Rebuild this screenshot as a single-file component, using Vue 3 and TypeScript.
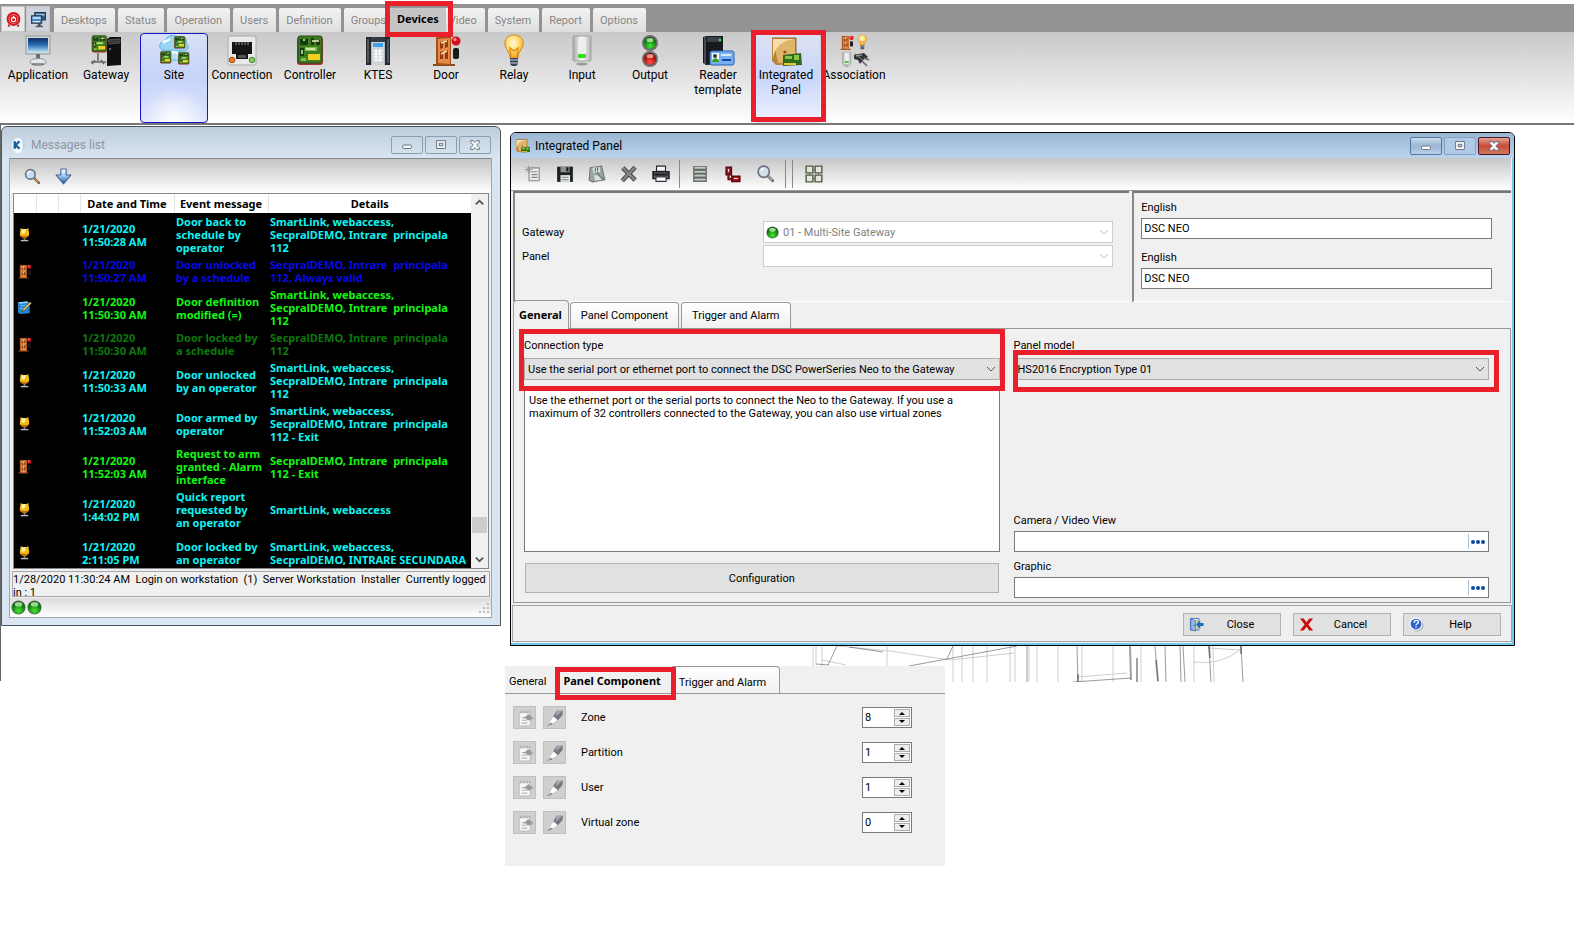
<script setup lang="ts">
import { ref } from 'vue'

interface RibbonItem { label: string; icon: string; state?: 'selected' | 'marked' }
interface EventRow { icon: string; date: string; text: string; details: string; color: string; tall?: boolean }
interface ComponentRow { label: string; value: number }

const board = '<rect x="3" y="2" width="26" height="28" rx="3" fill="#a33"/><rect x="4" y="1" width="24" height="27" rx="2" fill="#3d7a22" stroke="#234d14"/><path d="M6 4h8v6H6zM17 3h3v7h-3zM22 5h4v5h-4zM6 13h4v8H6z" fill="#163d10"/><path d="M11 12h12v4H11zM7 23h5v3H7z" fill="#7fc04a"/><rect x="14" y="19" width="12" height="6" fill="#f0d020"/><path d="M9 5h2M18 6h7M12 14h9M8 15v4" stroke="#e8f0c0" stroke-width="1.4"/>'
const door = '<path d="M3 30h22" stroke="#8a4a22" stroke-width="2"/><path d="M6 2h15v28H6z" fill="#a4501c"/><path d="M8 4l12-1v26L8 28z" fill="#e58a45"/><path d="M10 7l3-1v7l-3 1zM15 6l3-1v7l-3 1zM10 17l3-1v8h-3zM15 16l3-1v9h-3z" fill="#8c3c10"/><path d="M11 8l6-2M11 19l6-3" stroke="#ffd9a8" stroke-width="1.5"/><circle cx="26" cy="6" r="4.5" fill="#d41020"/><circle cx="25" cy="4.500" r="1.600" fill="#ff9a9a"/><rect x="23" y="13" width="6" height="11" rx="2" fill="#191919"/>'
const bulb = '<path d="M16 0c-7 0-10 5-9 10 1 5 5 7 5 13h8c0-6 4-8 5-13 1-5-2-10-9-10z" fill="url(#g-bulb)" stroke="#d18a1c"/><path d="M13 22l-1-9 4 3 4-3-1 9" fill="none" stroke="#e09010" stroke-width="1.4"/><path d="M12 23h8v6l-2 2h-4l-2-2z" fill="#38405c"/><path d="M12 25h8M12 28h8" stroke="#cdd4e4"/>'
const inputUnit = '<rect x="7" y="1" width="18" height="25" rx="1" fill="url(#g-silver)" stroke="#a0a0a0"/><rect x="12" y="3" width="8" height="15" fill="#ededed"/><rect x="12" y="19" width="8" height="4" rx="1" fill="#35dc20"/><ellipse cx="16" cy="29" rx="6" ry="1.500" fill="#999"/>'
const magnifier = '<path d="M19 19l9 9" stroke="#7a6140" stroke-width="5" stroke-linecap="round"/><path d="M20 20l7 7" stroke="#d9a45c" stroke-width="2"/><circle cx="12" cy="12" r="9" fill="#c7dcf4" stroke="#67717f" stroke-width="3"/><path d="M7 11a6 6 0 0 1 6-5" fill="none" stroke="#fff" stroke-width="2.500"/>'
const led = '<circle cx="16" cy="16" r="15" fill="#5d6b5d"/><circle cx="16" cy="16" r="13.500" fill="url(#g-green)"/><ellipse cx="16" cy="9" rx="8" ry="5" fill="#c4f7b8" opacity=".75"/>'
const integrated = '<path d="M2 3h24v27H6l-4-4z" fill="#b8863a"/><path d="M3 4h22v24H8z" fill="#e0b56a"/><path d="M3 23C5 12 11 6 24 4H3z" fill="#f5dcaa"/><path d="M26 3v26M2 3h24" stroke="#95652a"/><circle cx="15" cy="17" r="1.600" fill="#8a5c20"/><path d="M13 20l18-2 1 12-19 1z" fill="#2f6a1c"/><path d="M15 21h7v3h-7zM24 20h5v5h-5z" fill="#86c644"/><path d="M14 29h12" stroke="#e6c93a" stroke-width="2"/>'

const icons: Record<string, string> = {
  application: '<rect x="4" y="1" width="24" height="18" fill="#d6dade" stroke="#8d959c"/><rect x="6" y="3" width="20" height="14" fill="url(#g-screen)"/><path d="M14 19h4v5h-4z" fill="#65707c"/><ellipse cx="16" cy="27" rx="8" ry="3.500" fill="#e5e8ea" stroke="#8d959c"/><path d="M10 29h12" stroke="#444"/>',
  gateway: `<g transform="translate(0 0) scale(.58)">${board}</g><path d="M8 18v8M1 27h15M5 25l-3 4M11 25l3 4" stroke="#666" stroke-width="1.5"/><path d="M17 4l3-2h11v28l-14 1z" fill="#101010"/><path d="M18 5l12-1v3H18zM18 9l12-1" fill="#333" stroke="#555"/><circle cx="20" cy="14" r="1" fill="#888"/>`,
  site: `<path d="M4 15c-5-4-1-9 3-8 1-7 9-8 12-5 5-2 11 1 9 6 4 3 2 8-2 8z" fill="#9ad4f0" stroke="#5fb0dc"/><path d="M6 24c-4-3 1-8 5-7 4-4 11-2 12 2 4 0 6 5 2 7z" fill="#b2e0f5" stroke="#6ab8de"/><path d="M5 8c3-3 5-2 7-4M14 18c3-2 5 0 7 2" stroke="#fff" stroke-width="2" fill="none"/><g transform="translate(15 1) scale(.42)">${board}</g><g transform="translate(1 16) scale(.42)">${board}</g><g transform="translate(19 17) scale(.42)">${board}</g>`,
  connection: '<rect x="2" y="1" width="28" height="29" rx="2" fill="#e9e9e9" stroke="#aaa"/><path d="M6 7h20v12h-4v5H10v-5H6z" fill="#161616"/><path d="M10 7v3M13 7v3M16 7v3M19 7v3M22 7v3" stroke="#889"/><path d="M12 20h8v3h-8z" fill="#555"/><circle cx="6" cy="25" r="2.800" fill="#ef7b31" stroke="#a44a14"/><circle cx="26" cy="25" r="2.800" fill="#84c765" stroke="#4b8435"/>',
  controller: board,
  ktes: '<path d="M4 2h24v27l-5 1H9l-5-1z" fill="#b4bac0"/><path d="M4 2h5v28H4zM28 2h-5v28h5z" fill="#25292d"/><path d="M6 4v24M26 4v24" stroke="#7a848c"/><rect x="10" y="2" width="12" height="28" fill="#cfd4da"/><path d="M9 2h14v5H9z" fill="#32383e"/><rect x="11" y="8" width="10" height="4" fill="#3c9ff0"/><path d="M11 16h10M11 19h10M11 22h10M11 25h10M14 14v13M18 14v13" stroke="#fff" stroke-width="1.200"/>',
  door,
  relay: bulb,
  input: inputUnit,
  output: '<circle cx="16" cy="8" r="8" fill="#6d6d6d"/><circle cx="16" cy="8" r="6" fill="url(#g-green)"/><ellipse cx="16" cy="5" rx="3.500" ry="2" fill="#b4f5a4" opacity=".8"/><circle cx="16" cy="24" r="8" fill="#6d6d6d"/><circle cx="16" cy="24" r="6" fill="url(#g-red)"/><ellipse cx="16" cy="21" rx="3.500" ry="2" fill="#ffb0a8" opacity=".8"/>',
  reader: '<path d="M1 2l4-1h16v28l-17 1-3-2z" fill="#17191d"/><path d="M5 2h14v5H5z" fill="#3c424a"/><path d="M3 2v27" stroke="#72808c"/><circle cx="18" cy="5" r="1.300" fill="#3fe03b"/><rect x="8" y="16" width="24" height="14" rx="2" fill="#76aef0" stroke="#2360b8"/><rect x="10" y="18" width="7" height="9" fill="#f3f6fb"/><circle cx="13" cy="21" r="2" fill="#2f3b3d"/><path d="M10 27c0-5 7-5 7 0z" fill="#35a028"/><path d="M19 20h10" stroke="#fff" stroke-width="1.500"/><path d="M20 25h9" stroke="#1748a0" stroke-width="2"/>',
  integrated,
  association: `<g transform="translate(1 0) scale(.48)">${door}</g><g transform="translate(17 0) scale(.46)">${bulb}</g><g transform="translate(1 17) scale(.48)">${inputUnit}</g><path d="M16 20l10-2 4 4-5 3-3 4-2-4-4-1z" fill="#333"/><path d="M17 19l8 6M24 26l5 5M26 23l5 2" stroke="#666" stroke-width="1.500"/><path d="M18 21l6-1" stroke="#aaa"/>`,
  alarm: '<circle cx="16" cy="15" r="13" fill="#d0161e"/><path d="M7 24l-2 5h5M25 24l2 5h-5" fill="#a01010"/><circle cx="16" cy="15" r="8.500" fill="none" stroke="#f0706a" stroke-width="2"/><circle cx="16" cy="16" r="4" fill="none" stroke="#fff" stroke-width="2"/><path d="M16 9v5" stroke="#fff" stroke-width="2.500"/>',
  screens: '<path d="M9 3h20v14H9z" fill="#2f5e8e" stroke="#243442" stroke-width="2"/><path d="M11 5h16v4H11z" fill="#8fc0e8"/><path d="M3 9h19v14H3z" fill="#4f88bc" stroke="#243442" stroke-width="2"/><path d="M5 11h15v4H5z" fill="#b8dcf5"/><path d="M5 20h14" stroke="#e6f3fb" stroke-width="2"/><path d="M15 23h5v5h-5z" fill="#444"/><path d="M11 29h13" stroke="#555" stroke-width="3"/>',
  kantech: '<ellipse cx="15" cy="16" rx="13" ry="16" fill="#f5fbff"/><path d="M23 3c8 7 8 19 0 26 3-9 3-17 0-26z" fill="#a7d6ee"/><path d="M8 7v16M18 7l-8 8 8 8" fill="none" stroke="#145f98" stroke-width="5"/>',
  magnifier,
  arrowDown: '<path d="M11 2h10v11h9L16 30 2 13h9z" fill="url(#g-arrow)" stroke="#42618f" stroke-width="2" stroke-linejoin="round"/>',
  user: '<path d="M8 2l4 2h8l4-2 2 12c0 7-5 9-10 9S5 21 6 14z" fill="#f4b916"/><path d="M10 5h9l-2 8-7 2z" fill="#fff2a0"/><path d="M7 17c4 3 14 3 18 0-1 4-4 7-9 7s-8-3-9-7z" fill="#c06c08"/><path d="M14 24h4v3h-4z" fill="#aaa"/><path d="M8 29h16" stroke="#bbb" stroke-width="3"/>',
  doorSmall: door,
  edit: '<path d="M2 5l20-2 5 3v22l-20 2-5-3z" fill="#2783d0"/><path d="M2 5l20-2 3 3-19 2z" fill="#9bd5ff"/><path d="M7 12h14M7 18h14" stroke="#72c4ff" stroke-width="2"/><path d="M11 25l2-6L28 4l3 3-15 15z" fill="#e9cd72" stroke="#4a4020" stroke-width="1.500"/>',
  led,
  newDoc: '<path d="M9 5h18v23H9z" fill="#ededed" stroke="#888" stroke-width="2"/><path d="M13 12h11M13 17h11M13 22h11" stroke="#888" stroke-width="2"/><path d="M8 1v14M1 8h14M3 3l10 10M13 3L3 13" stroke="#999" stroke-width="1.700"/>',
  save: '<path d="M2 3h28v27H2z" fill="#1e211f"/><path d="M8 3h16v10H8z" fill="#8a938c"/><path d="M18 4h4v7h-4z" fill="#1c1f1d"/><path d="M8 18h17v12H8z" fill="#e5ebe6"/><path d="M10 22h12M10 26h12" stroke="#929a94" stroke-width="2"/>',
  saveAs: '<path d="M4 5l20-3 6 24-22 4-6-3z" fill="#9aa69f" stroke="#6d7972" stroke-width="2"/><path d="M8 5l12-2 2 9-12 2z" fill="#e2e8e4"/><path d="M13 5v7M17 4v7" stroke="#54615a" stroke-width="2"/><path d="M10 18h13l2 8-12 2z" fill="#d9dfdc"/><path d="M15 13l13 14" stroke="#727f78" stroke-width="3"/>',
  cross: '<path d="M5 5l22 22M27 4L4 28" stroke="#4b4f4c" stroke-width="8"/><path d="M5 5l22 22M27 4L4 28" stroke="#858a86" stroke-width="4"/>',
  printer: '<path d="M8 2h16v9H8z" fill="#f4f4f4" stroke="#282828" stroke-width="2"/><path d="M2 12h28v12H2z" fill="#6d7177" stroke="#202124" stroke-width="3"/><path d="M4 17h24" stroke="#1d1e21" stroke-width="4"/><path d="M7 21h18v8H7z" fill="#fff" stroke="#33363b" stroke-width="2"/>',
  list: '<path d="M4 2h24v28H4z" fill="#4e564f"/><path d="M6 5h20M6 12h20M6 19h20M6 26h20" stroke="#c2c9c3" stroke-width="4"/><path d="M6 7h20M6 14h20M6 21h20M6 28h20" stroke="#8d958f" stroke-width="1.500"/>',
  link: '<path d="M4 4h9v13H4zM14 20h14v9H14z" fill="#b51824" stroke="#620811" stroke-width="3"/><path d="M8 16v9h7" fill="none" stroke="#750b14" stroke-width="4"/><path d="M8 7v5M18 24h6" stroke="#fff" stroke-width="2"/>',
  find: '<path d="M19 19l9 9" stroke="#66706c" stroke-width="5" stroke-linecap="round"/><path d="M20 20l7 7" stroke="#b5bdb9" stroke-width="2"/><circle cx="12" cy="12" r="10" fill="#d3dcea" stroke="#67717f" stroke-width="3"/><path d="M7 11a6 6 0 0 1 6-5" fill="none" stroke="#fff" stroke-width="2.500"/>',
  grid: '<path d="M2 2h12v12H2zM18 2h12v12H18zM2 18h12v12H2zM18 18h12v12H18z" fill="#e2e8d6" stroke="#505b48" stroke-width="2.500"/><path d="M14 8h4M14 24h4M8 14v4M24 14v4" stroke="#687060" stroke-width="2"/>',
  exit: '<path d="M3 3h18v25H3z" fill="#dbe8fa" stroke="#4677b7" stroke-width="2"/><path d="M4 4l10 4v22L4 27z" fill="#91b9ec" stroke="#3866a6" stroke-width="1.500"/><circle cx="11" cy="18" r="1.300" fill="#245"/><path d="M16 6h4v20h-4z" fill="#e7bd61"/><path d="M31 13h-7V7l-9 9 9 9v-6h7z" fill="#1c70c4"/>',
  cancel: '<path d="M2 3h8l6 8 6-8h8l-10 13 10 13h-8l-6-8-6 8H2l10-13z" fill="#cb0b0b"/>',
  help: '<circle cx="17" cy="17" r="14" fill="#a8acb8"/><circle cx="15" cy="15" r="14" fill="#f4f7ff"/><circle cx="15" cy="15" r="11.500" fill="#2f63cc"/><path d="M11 12c0-6 9-6 9-1 0 4-5 3-5 7M15 20v3" fill="none" stroke="#fff" stroke-width="2.800"/>',
  note: '<path d="M6 6h19v24H6z" fill="#f7f7f4" stroke="#aaa"/><path d="M8 3v5M12 3v5M16 3v5M20 3v5M24 3v5" stroke="#a5a5a5" stroke-width="1.500"/><path d="M10 15h9M10 20h9M10 25h10" stroke="#b5b5b5" stroke-width="2"/><path d="M22 9l10 8h-5v3h-8v-3h-6z" fill="#989898"/>',
  pen: '<path d="M2 30l8-13 6-6 7 7-7 6z" fill="#fff" stroke="#aaa"/><path d="M2 30l7-6 2 3z" fill="#777"/><path d="M13 13l6-10h11l-1 8-8 9z" fill="#74767f"/><path d="M19 3h10l-12 11z" fill="#a5a6ad"/>',
}

const menuTabs = ['Desktops', 'Status', 'Operation', 'Users', 'Definition', 'Groups', 'Devices', 'Video', 'System', 'Report', 'Options']
const ribbon: RibbonItem[] = [
  { label: 'Application', icon: 'application' },
  { label: 'Gateway', icon: 'gateway' },
  { label: 'Site', icon: 'site', state: 'selected' },
  { label: 'Connection', icon: 'connection' },
  { label: 'Controller', icon: 'controller' },
  { label: 'KTES', icon: 'ktes' },
  { label: 'Door', icon: 'door' },
  { label: 'Relay', icon: 'relay' },
  { label: 'Input', icon: 'input' },
  { label: 'Output', icon: 'output' },
  { label: 'Reader\ntemplate', icon: 'reader' },
  { label: 'Integrated\nPanel', icon: 'integrated', state: 'marked' },
  { label: 'Association', icon: 'association' },
]

const place = 'SecpralDEMO, Intrare  principala\n112'
const events: EventRow[] = [
  { icon: 'user', date: '1/21/2020\n11:50:28 AM', text: 'Door back to\nschedule by\noperator', details: 'SmartLink, webaccess,\n' + place, color: 'cyan' },
  { icon: 'doorSmall', date: '1/21/2020\n11:50:27 AM', text: 'Door unlocked\nby a schedule', details: place + ', Always valid', color: 'blue' },
  { icon: 'edit', date: '1/21/2020\n11:50:30 AM', text: 'Door definition\nmodified (=)', details: 'SmartLink, webaccess,\n' + place, color: 'lime' },
  { icon: 'doorSmall', date: '1/21/2020\n11:50:30 AM', text: 'Door locked by\na schedule', details: place, color: 'green' },
  { icon: 'user', date: '1/21/2020\n11:50:33 AM', text: 'Door unlocked\nby an operator', details: 'SmartLink, webaccess,\n' + place, color: 'cyan' },
  { icon: 'user', date: '1/21/2020\n11:52:03 AM', text: 'Door armed by\noperator', details: 'SmartLink, webaccess,\n' + place + ' - Exit', color: 'cyan' },
  { icon: 'doorSmall', date: '1/21/2020\n11:52:03 AM', text: 'Request to arm\ngranted - Alarm\ninterface', details: place + ' - Exit', color: 'lime' },
  { icon: 'user', date: '1/21/2020\n1:44:02 PM', text: 'Quick report\nrequested by\nan operator', details: 'SmartLink, webaccess', color: 'cyan' },
  { icon: 'user', date: '1/21/2020\n2:11:05 PM', text: 'Door locked by\nan operator', details: 'SmartLink, webaccess,\nSecpralDEMO, INTRARE SECUNDARA', color: 'cyan', tall: true },
]

const toolGroups = [['newDoc', 'save', 'saveAs', 'cross', 'printer'], ['list', 'link', 'find'], ['grid']]
const panelTabs = ['General', 'Panel Component', 'Trigger and Alarm']
const components = ref<ComponentRow[]>([
  { label: 'Zone', value: 8 },
  { label: 'Partition', value: 1 },
  { label: 'User', value: 1 },
  { label: 'Virtual zone', value: 0 },
])
const names = ref(['DSC NEO', 'DSC NEO'])
const description = 'Use the ethernet port or the serial ports to connect the Neo to the Gateway. If you use a\nmaximum of 32 controllers connected to the Gateway, you can also use virtual zones'
const links = ref([{ id: 'camera', label: 'Camera / Video View', value: '' }, { id: 'graphic', label: 'Graphic', value: '' }])
const actions = [{ label: 'Close', icon: 'exit' }, { label: 'Cancel', icon: 'cancel' }, { label: 'Help', icon: 'help' }]
const captionGlyphs: Record<string, string> = {
  minimize: '<rect x="3" y="8" width="10" height="4" rx="1"/>',
  maximize: '<path fill-rule="evenodd" d="M3 3h10v9H3zM6 6v3h4V6z"/>',
  close: '<path d="M3 3h3l2 2 2-2h3v2l-3 3 3 3v2h-3l-2-2-2 2H3v-2l3-3-3-3z"/>',
}
</script>

<template>
  <div class="screen">
    <svg class="defs" width="0" height="0" aria-hidden="true">
      <defs>
        <radialGradient id="g-green" cx=".5" cy=".75" r=".7"><stop offset="0" stop-color="#4fe236" /><stop offset=".6" stop-color="#149414" /><stop offset="1" stop-color="#064f0a" /></radialGradient>
        <radialGradient id="g-red" cx=".5" cy=".75" r=".7"><stop offset="0" stop-color="#ff5a48" /><stop offset=".6" stop-color="#c01414" /><stop offset="1" stop-color="#5e0606" /></radialGradient>
        <radialGradient id="g-bulb" cx=".45" cy=".35" r=".6"><stop offset="0" stop-color="#fffbe0" /><stop offset=".5" stop-color="#ffe07a" /><stop offset="1" stop-color="#f5ac2c" /></radialGradient>
        <linearGradient id="g-screen" x1="0" y1="0" x2="0" y2="1"><stop offset="0" stop-color="#0e2f63" /><stop offset=".5" stop-color="#2c6cb0" /><stop offset="1" stop-color="#b8e2f8" /></linearGradient>
        <linearGradient id="g-silver" x1="0" y1="0" x2="1" y2="0"><stop offset="0" stop-color="#a6a6a6" /><stop offset=".5" stop-color="#fff" /><stop offset="1" stop-color="#b0b0b0" /></linearGradient>
        <linearGradient id="g-arrow" x1="0" y1="0" x2="0" y2="1"><stop offset="0" stop-color="#fff" /><stop offset=".45" stop-color="#a5ccf3" /><stop offset="1" stop-color="#0f52b4" /></linearGradient>
      </defs>
    </svg>

    <header>
      <nav class="menu">
        <button class="quick" aria-label="Alarms"><svg viewBox="0 0 32 32" v-html="icons.alarm" /></button>
        <button class="quick blue" aria-label="Desktops overview"><svg viewBox="0 0 32 32" v-html="icons.screens" /></button>
        <button v-for="t in menuTabs" :key="t" class="menu-tab" :class="{ current: t === 'Devices' }">{{ t }}<span v-if="t === 'Devices'" class="mark" /></button>
      </nav>
      <div class="ribbon">
        <button v-for="r in ribbon" :key="r.icon" class="ribbon-item" :class="r.state">
          <svg viewBox="0 0 32 32" v-html="icons[r.icon]" />
          <span>{{ r.label }}</span>
          <span v-if="r.state === 'marked'" class="mark" />
        </button>
      </div>
    </header>

    <main class="desktop">
      <div class="left-side">
        <section class="window messages">
          <div class="title-bar">
            <svg viewBox="0 0 32 32" v-html="icons.kantech" />
            <h2>Messages list</h2>
            <button v-for="(g, name) in captionGlyphs" :key="name" class="caption" :aria-label="String(name)"><svg viewBox="0 0 16 16" v-html="g" /></button>
          </div>
          <div class="messages-body">
            <div class="msg-tools">
              <button aria-label="Search"><svg viewBox="0 0 32 32" v-html="icons.magnifier" /></button>
              <button aria-label="Scroll to last"><svg viewBox="0 0 32 32" v-html="icons.arrowDown" /></button>
            </div>
            <div class="list">
              <div class="list-view">
                <table>
                  <colgroup><col class="c-icon"><col class="c-icon"><col class="c-icon"><col class="c-text"><col class="c-text"><col></colgroup>
                  <thead><tr><th /><th /><th /><th>Date and Time</th><th>Event message</th><th>Details</th></tr></thead>
                  <tbody>
                    <tr v-for="(e, i) in events" :key="i" :class="[e.color, { tall: e.tall }]">
                      <td class="icon-cell"><svg viewBox="0 0 32 32" v-html="icons[e.icon]" /></td><td /><td />
                      <td>{{ e.date }}</td><td>{{ e.text }}</td><td>{{ e.details }}</td>
                    </tr>
                  </tbody>
                </table>
              </div>
              <div class="scroll">
                <svg viewBox="0 0 10 10"><path d="M1 7l4-4 4 4" /></svg>
                <span class="thumb" />
                <svg viewBox="0 0 10 10"><path d="M1 3l4 4 4-4" /></svg>
              </div>
            </div>
            <p class="last-message">1/28/2020 11:30:24 AM&nbsp; Login on workstation&nbsp; (1)&nbsp; Server Workstation&nbsp; Installer&nbsp; Currently logged<br>in : 1</p>
            <div class="status">
              <svg viewBox="0 0 32 32" v-html="icons.led" /><svg viewBox="0 0 32 32" v-html="icons.led" />
              <svg class="grip" viewBox="0 0 12 12"><path d="M9 1h2v2H9zM5 5h2v2H5zM9 5h2v2H9zM1 9h2v2H1zM5 9h2v2H5zM9 9h2v2H9z" fill="#bbb" /></svg>
            </div>
          </div>
        </section>
      </div>

      <div class="right-side">
        <section class="window panel">
          <div class="title-bar">
            <svg viewBox="0 0 32 32" v-html="icons.integrated" />
            <h2>Integrated Panel</h2>
            <button v-for="(g, name) in captionGlyphs" :key="name" class="caption" :class="name" :aria-label="String(name)"><svg viewBox="0 0 16 16" v-html="g" /></button>
          </div>
          <div class="tools">
            <div v-for="(g, i) in toolGroups" :key="i" class="tool-group">
              <button v-for="t in g" :key="t" :aria-label="t"><svg viewBox="0 0 32 32" v-html="icons[t]" /></button>
            </div>
          </div>
          <div class="head">
            <div class="head-left">
              <label for="gateway">Gateway</label>
              <div class="combo off has-led">
                <svg class="combo-led" viewBox="0 0 32 32" v-html="icons.led" />
                <select id="gateway" disabled><option>01 - Multi-Site Gateway</option></select>
                <svg class="chev" viewBox="0 0 10 10"><path d="M1 3l4 4 4-4" /></svg>
              </div>
              <label for="panel">Panel</label>
              <div class="combo off">
                <select id="panel" disabled><option /></select>
                <svg class="chev" viewBox="0 0 10 10"><path d="M1 3l4 4 4-4" /></svg>
              </div>
            </div>
            <div class="head-right">
              <template v-for="(n, i) in names" :key="i">
                <label :for="'name' + i">English</label>
                <input :id="'name' + i" v-model="names[i]" class="field">
              </template>
            </div>
          </div>
          <div class="tabs">
            <button v-for="t in panelTabs" :key="t" :class="{ current: t === 'General' }">{{ t }}</button>
          </div>
          <div class="pane">
            <div class="column">
              <div class="marked-group">
                <label for="conn">Connection type</label>
                <div class="combo">
                  <select id="conn"><option>Use the serial port or ethernet port to connect the DSC PowerSeries Neo to the Gateway</option></select>
                  <svg class="chev" viewBox="0 0 10 10"><path d="M1 3l4 4 4-4" /></svg>
                </div>
                <span class="mark conn-mark" />
              </div>
              <textarea readonly aria-label="Connection description" :value="description" />
              <button class="push">Configuration</button>
            </div>
            <div class="column">
              <label for="model">Panel model</label>
              <div class="combo">
                <select id="model"><option>HS2016 Encryption Type 01</option></select>
                <svg class="chev" viewBox="0 0 10 10"><path d="M1 3l4 4 4-4" /></svg>
                <span class="mark model-mark" />
              </div>
              <div class="links">
                <template v-for="l in links" :key="l.id">
                  <label :for="l.id">{{ l.label }}</label>
                  <div class="picker">
                    <input :id="l.id" v-model="l.value" class="field">
                    <button :aria-label="'Choose ' + l.label"><svg viewBox="0 0 16 6"><circle cx="3" cy="3" r="2" /><circle cx="8" cy="3" r="2" /><circle cx="13" cy="3" r="2" /></svg></button>
                  </div>
                </template>
              </div>
            </div>
          </div>
          <div class="actions">
            <button v-for="a in actions" :key="a.label" class="push"><svg viewBox="0 0 32 32" v-html="icons[a.icon]" /><span>{{ a.label }}</span></button>
          </div>
        </section>

        <div class="lower">
          <svg class="sketch" viewBox="0 0 436 36" aria-hidden="true">
            <g fill="none" stroke="#888" stroke-width="1" opacity=".4">
              <path d="M2 0v20M5 0v19M11 0v20M76 0v20M142 0v36M151 0v36M162 0v36M176 0v36M199 0v36M204 0v36M218 0v36M226 0v36M247 0v36M271 0v36M302 0v36M330 0v36M383 0v36M402 0l1 36" />
              <path d="M27 0l52 5 60 9 64-7M11 14l24 5M266 31l50-4M382 16q28 4 48-13M397 2l33 2" />
            </g>
            <g fill="none" stroke="#666" stroke-width="1" opacity=".65">
              <path d="M26 0l-9 19M5 18l13 1M38 1l34 5M98 20l108-20M136 13l6-13" />
              <path d="M216 0v36M266 0l1 36M344 0l3 36M354 0l1 36M369 0l1 36M372 0l2 36M398 0l2 36M430 0l2 36" />
              <path d="M262 36l58-4" />
            </g>
            <path d="M319 0l1 34M326 12v24M267 28v8M345 14l2 21M398 0l1 12M430 0v8" stroke="#444" stroke-width="2" opacity=".5" />
          </svg>
          <section class="components">
            <div class="component-tabs">
              <button>General</button>
              <button class="current">Panel Component<span class="mark" /></button>
              <button class="last">Trigger and Alarm</button>
            </div>
            <div class="component-rows">
              <div v-for="c in components" :key="c.label" class="component-row">
                <button class="square" :aria-label="'New ' + c.label"><svg viewBox="0 0 32 32" v-html="icons.note" /></button>
                <button class="square" :aria-label="'Edit ' + c.label"><svg viewBox="0 0 32 32" v-html="icons.pen" /></button>
                <label :for="'count-' + c.label">{{ c.label }}</label>
                <div class="spin">
                  <input :id="'count-' + c.label" v-model.number="c.value" type="number">
                  <div class="spin-buttons">
                    <button aria-label="Increase" @click="c.value++"><svg viewBox="0 0 6 4"><path d="M0 4l3-3 3 3z" /></svg></button>
                    <button aria-label="Decrease" @click="c.value--"><svg viewBox="0 0 6 4"><path d="M0 0l3 3 3-3z" /></svg></button>
                  </div>
                </div>
              </div>
            </div>
          </section>
        </div>
      </div>
    </main>
  </div>
</template>

<style>
body { margin: 0; background: #fff; }
</style>

<style scoped>
* { box-sizing: border-box; }
.screen { font: 11px/13px Roboto, "Liberation Sans", sans-serif; color: #000; padding-top: 4px; }
.defs { position: absolute; }
button, input, select, textarea { font: inherit; color: inherit; margin: 0; border-radius: 0; }
button { padding: 0; border: 0; background: none; }
h2, p { margin: 0; font: inherit; }
svg { display: block; flex: none; overflow: visible; }
.mark { position: absolute; border: 5px solid #e9202b; z-index: 5; pointer-events: none; }

.menu { display: flex; gap: 3px; height: 28px; padding: 4px 0 0 1px; background: #939393; }
.quick { width: 24px; margin: -2px -2px 0 0; display: grid; place-items: center; background: #e9e9e9; border: 1px solid #c6c6c6; }
.quick.blue { background: #ccd3de; margin-right: 1px; }
.quick svg { width: 17px; height: 17px; }
.menu-tab { position: relative; padding: 0 8px 0 7px; color: #858585; background: linear-gradient(#f3f3f3, #dedede); border-radius: 2px 2px 0 0; }
.menu-tab.current { z-index: 2; padding: 0 7px 3px; margin: 0 -7px; color: #000; background: #c5c5c5; font-family: "Noto Sans", sans-serif; font-weight: 700; }
.menu-tab .mark { inset: -7px -7px -5px -5px; }
.ribbon { display: flex; height: 93px; padding: 1px 0 0 4px; background: linear-gradient(#c8c8c8, #e3e3e3 50%, #fff); border-bottom: 2px solid #777; }
.ribbon-item { position: relative; width: 68px; display: flex; flex-direction: column; align-items: center; gap: 1px; padding-top: 1px; border: 1px solid transparent; border-radius: 4px; font-size: 12px; line-height: 15px; white-space: pre; }
.ribbon-item svg { width: 32px; height: 32px; }
.ribbon-item.selected { border-color: #1616c8; background: radial-gradient(ellipse 50% 40% at 50% 100%, #fff, #fff0), linear-gradient(#d8e0f4, #c6d3fa 50%, #dfe6fd); }
.ribbon-item.marked { background: linear-gradient(#dce2f3, #c9d6fb 50%, #eef2ff); }
.ribbon-item .mark { inset: -4px -7px 0 -2px; }

.desktop { display: grid; grid-template-columns: 502px minmax(0, 1fr); }
.left-side { align-self: start; border-left: 1px solid #666; padding: 1px 0 55px; margin-right: 1px; }
.title-bar { display: flex; align-items: center; gap: 2px; }
.title-bar h2 { flex: 1; font-size: 12px; line-height: 16px; padding-left: 3px; }
.title-bar > svg { width: 15px; height: 15px; }
.caption { width: 32px; height: 18px; display: grid; place-items: center; border: 1px solid #8e9fb2; border-radius: 2px; }
.caption svg { width: 14px; height: 14px; fill: #f4f7fa; stroke: #5c6670; }
.messages { border: 1px solid #4e555c; border-radius: 6px 6px 0 0; background: linear-gradient(#bfcddc, #d9e5f2 32px); padding: 0 8px 7px 7px; }
.messages .title-bar { height: 31px; padding: 5px 1px 0 2px; }
.messages h2 { color: #8e969e; }
.messages-body { background: #f0f0f0; border: 1px solid #a0a6ac; border-top-color: #888; }
.msg-tools { display: flex; gap: 14px; height: 34px; padding: 6px 14px; background: linear-gradient(#c4c4c4, #fff); }
.msg-tools svg { width: 17px; height: 17px; }
.list { display: flex; height: 376px; margin: 0 2px 0 3px; border: 1px solid #828790; background: #f0f0f0; }
.list-view { flex: 1; min-width: 0; overflow: hidden; background: #000; }
.scroll { width: 17px; display: flex; flex-direction: column; align-items: center; padding: 4px 0; }
.scroll svg { width: 9px; height: 9px; fill: none; stroke: #505050; stroke-width: 2; }
.thumb { width: 15px; height: 16px; background: #cdcdcd; margin: auto 0 22px; }
table { width: 100%; table-layout: fixed; border-collapse: collapse; font-family: "Noto Sans", sans-serif; font-weight: 700; white-space: pre; }
.c-icon { width: 22px; }
.c-text { width: 94px; }
th { height: 19px; padding: 0; background: #fff; border-right: 1px solid #e4e4e4; }
th:last-child { border: 0; }
td { padding: 2px 0 2px 2px; vertical-align: middle; }
.tall td { height: 43px; }
.icon-cell { padding-left: 3px; }
.icon-cell svg { width: 15px; height: 15px; }
.cyan { color: #12f2f2; }
.blue { color: #0808e8; }
.lime { color: #14f514; }
.green { color: #0b780b; }
.last-message { height: 26px; margin: 2px 1px 1px 2px; padding: 1px 0 0; border: 1px solid #a8a8a8; overflow: hidden; white-space: nowrap; }
.status { display: flex; gap: 1px; align-items: center; height: 19px; padding: 0 1px; background: linear-gradient(#dcdcdc, #fff); }
.status svg { width: 15px; height: 15px; }
.status .grip { width: 12px; height: 12px; margin-left: auto; }

.right-side { padding: 7px 59px 0 8px; min-width: 0; }
.panel { border: 1px solid #000; border-radius: 6px 6px 0 0; background: #f0f0f0; box-shadow: inset -2px -2px #70c8ea; padding: 0 3px 3px 2px; }
.panel .title-bar { height: 25px; margin: 0 -3px 0 -2px; padding: 0 4px; border-radius: 5px 5px 0 0; background: linear-gradient(#9cb6d2, #bad3ef); }
.panel .caption { border-color: #53779f; background: linear-gradient(#cbdcee, #9ab6d4 50%, #b9d1ea); }
.panel .caption.maximize { border-color: #86a2c3; background: #afc9e6; }
.panel .caption.close { border-color: #4a1420; background: linear-gradient(#e4a093, #c54c38 50%, #d07a60); }
.panel .caption svg { fill: #fff; }
.tools { display: flex; height: 33px; margin-left: -2px; padding: 2px 0 2px 13px; background: linear-gradient(#c6c6c6, #fff); border-bottom: 1px solid #999; }
.tool-group { display: flex; gap: 14px; padding-right: 9px; margin-right: 11px; align-items: center; border-right: 1px solid #888; }
.tool-group:nth-child(2) { padding-right: 10px; margin-right: 6px; gap: 15px; }
.tool-group:last-child { border-right: 0; border-left: 1px solid #888; padding-left: 12px; }
.tool-group svg { width: 18px; height: 18px; }
.head { display: grid; grid-template-columns: minmax(0, 615fr) minmax(0, 378fr); gap: 3px; height: 107px; }
.head > div { border-top: 2px solid #777; border-left: 2px solid #888; border-bottom: 1px solid #fff; }
.head-left { display: grid; grid-template-columns: 241px minmax(0, 1fr); grid-auto-rows: 22px; row-gap: 2px; align-items: center; padding: 28px 16px 0 7px; }
.head-right { display: flex; flex-direction: column; padding: 8px 19px 0 7px; }
.head-right label { height: 17px; }
.head-right .field { margin-bottom: 12px; }
.field { width: 100%; height: 21px; padding: 0 2px; background: #fff; border: 1px solid #7a7a7a; flex: none; }
.combo { position: relative; height: 22px; }
.combo select { appearance: none; width: 100%; height: 22px; padding: 0 20px 0 3px; border: 1px solid #adadad; background: #e1e1e1; opacity: 1; }
.combo.off select { background: #fff; border-color: #ccc; color: #808080; }
.combo.has-led select { padding-left: 19px; }
.combo-led { position: absolute; left: 3px; top: 5px; width: 13px; height: 13px; }
.chev { position: absolute; right: 4px; top: 6px; width: 10px; height: 10px; fill: none; stroke: #555; pointer-events: none; }
.off .chev { stroke: #bbb; }
.tabs { display: flex; gap: 2px; height: 30px; align-items: flex-end; }
.tabs button { height: 26px; padding: 0 10px; border: 1px solid #999; border-bottom: 0; border-radius: 4px 4px 0 0; background: linear-gradient(#fff, #f0f0f0); }
.tabs button.current { height: 29px; padding: 0 6px 2px 5px; margin: 0 -1px -1px 0; background: #f0f0f0; z-index: 1; }
.current { font-family: "Noto Sans", sans-serif; font-weight: 700; }
.pane { display: grid; grid-template-columns: minmax(0, 1fr) minmax(0, 1fr); gap: 14px; height: 275px; border: 1px solid #999; padding: 10px 21px 4px 10px; }
.column { display: flex; flex-direction: column; min-width: 0; }
.column label { display: block; height: 19px; flex: none; }
.marked-group { position: relative; }
.conn-mark { inset: -10px -5px -11px -5px; }
.model-mark { inset: -8px -10px -12px -1px; }
textarea { display: block; height: 164px; margin-top: 8px; padding: 5px 4px; border: 1px solid #7a7a7a; background: #fff; resize: none; outline: 0; overflow: hidden; white-space: pre; }
.push { display: flex; align-items: center; justify-content: center; background: #e1e1e1; border: 1px solid #adb2b5; }
.column > .push { height: 30px; margin: 11px 1px 0; }
.links { margin-top: auto; }
.links label { height: 17px; }
.picker { position: relative; margin-bottom: 8px; }
.picker:last-child { margin-bottom: 0; }
.picker button { position: absolute; right: 2px; top: 3px; height: 15px; padding: 0 1px; border-left: 1px solid #a9c3dc; }
.picker svg { width: 16px; height: 6px; fill: #0a4b9c; }
.actions { display: flex; justify-content: flex-end; gap: 12px; height: 37px; margin: 2px -1px 0 -1px; padding: 7px 10px; border: 1px solid #a5a5a5; }
.actions .push { width: 98px; height: 23px; padding: 0 5px; }
.actions svg { width: 15px; height: 15px; }
.actions span { flex: 1; padding-left: 2px; }

.lower { position: relative; margin-left: -5px; padding-top: 20px; }
.sketch { position: absolute; left: 306px; top: 0; width: 436px; height: 36px; overflow: hidden; }
.components { position: relative; width: 440px; height: 200px; background: #f0f0f0; }
.component-tabs { display: flex; height: 28px; border-bottom: 1px solid #999; }
.component-tabs button { position: relative; padding: 4px 10px 0 4px; }
.component-tabs .current { padding: 2px 11px 0 7px; }
.component-tabs .last { padding: 4px 13px 0 7px; border: 1px solid #999; border-width: 1px 1px 0 0; border-radius: 0 4px 0 0; background: linear-gradient(#fff, #f0f0f0); }
.component-tabs .mark { inset: 1px -4px -7px -1px; }
.component-rows { display: grid; row-gap: 12px; padding: 12px 33px 0 8px; }
.component-row { display: flex; align-items: center; gap: 7px; }
.component-row label { flex: 1; padding-left: 8px; }
.square { width: 23px; height: 23px; display: grid; place-items: center; background: #cfcfcf; border: 1px solid #c0c0c0; }
.square svg { width: 18px; height: 18px; }
.spin { display: flex; width: 50px; height: 21px; padding: 1px; border: 1px solid #7a7a7a; background: #fff; }
.spin input { flex: 1; min-width: 0; padding: 0 1px; border: 0; background: none; appearance: textfield; outline: 0; }
.spin input::-webkit-inner-spin-button { appearance: none; margin: 0; }
.spin-buttons { width: 16px; display: grid; gap: 1px; }
.spin-buttons button { display: grid; place-items: center; border: 1px solid #adadad; background: #eee; }
.spin-buttons svg { width: 6px; height: 4px; }
</style>
